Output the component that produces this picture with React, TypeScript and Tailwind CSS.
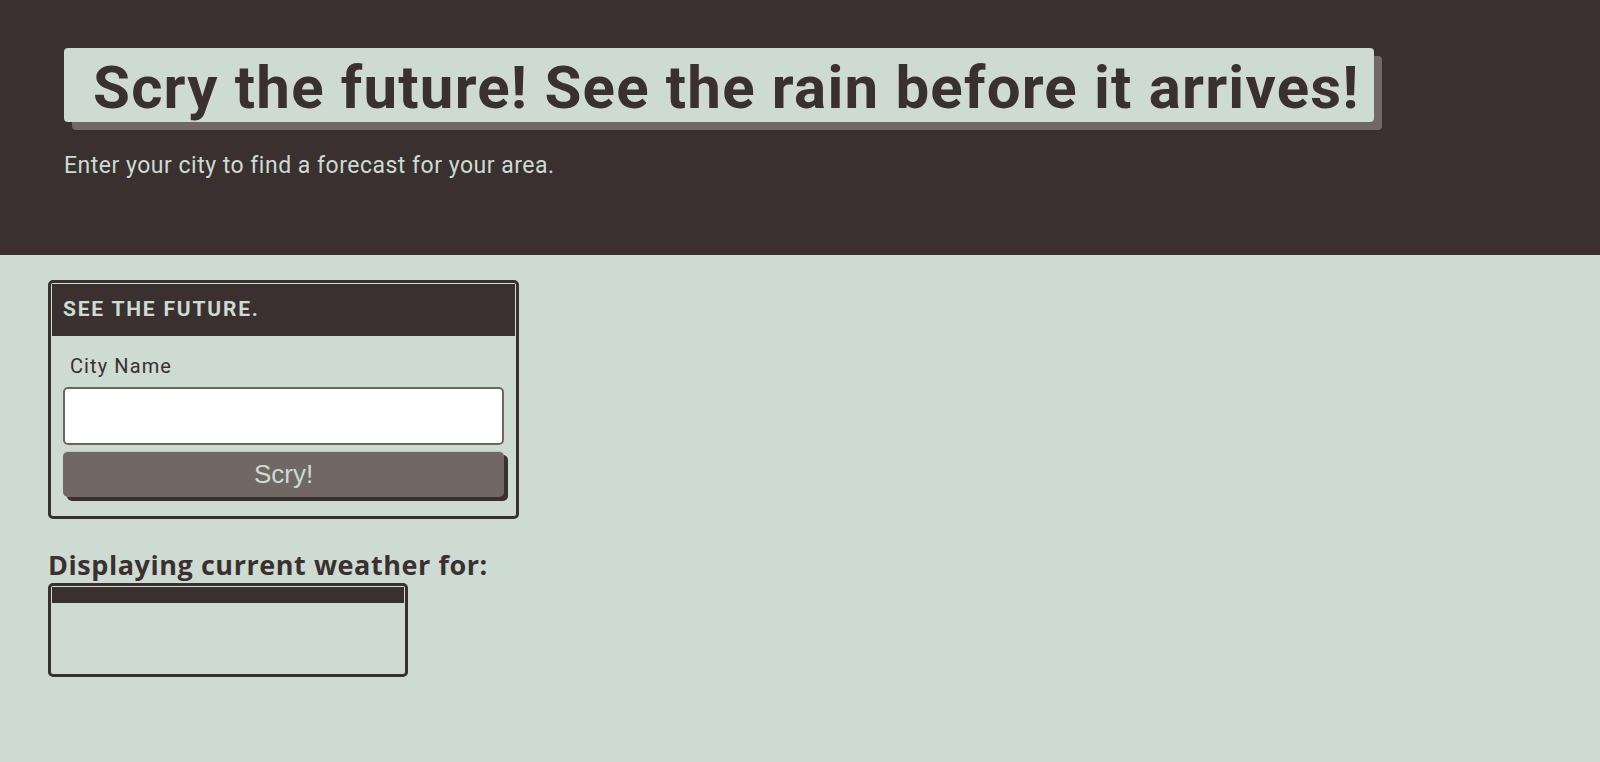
import { useState } from "react";

const font = { fontFamily: "Roboto, 'Noto Sans', sans-serif" };

export default function App() {
  const [city, setCity] = useState("");

  return (
    <div className="min-h-screen bg-[#cddbd3] text-[#3a3030]" style={font}>
      {/* ---------- hero ---------- */}
      <header className="h-[255px] bg-[#3a3030] pl-[64px] pt-[48px]">
        <h1 className="inline-flex h-[74px] items-center rounded-[4px] bg-[#cddbd3] pl-[29px] pr-[14px] pt-[6px] text-[60px] font-bold leading-none tracking-[1.2px] text-[#3a3030] shadow-[8px_8px_0_#716866]">
          Scry the future! See the rain before it arrives!
        </h1>
        <p className="mt-[30px] text-[23px] leading-[28px] tracking-[0.5px] text-[#cddbd3]">
          Enter your city to find a forecast for your area.
        </p>
      </header>

      <main className="px-[48px] pt-[25px]">
        {/* search card */}
        <form
          onSubmit={(e) => e.preventDefault()}
          className="w-[471px] rounded-[5px] border-[3px] border-[#3a3030] p-px"
        >
          <div className="flex h-[52px] items-center bg-[#3a3030] px-[11px] text-[21px] font-bold uppercase tracking-[1.8px] text-[#cddbd3]">
            See the future.
          </div>
          <div className="flex flex-col pb-[18px] pl-[11px] pr-[10px] pt-[18px]">
            <label className="pl-[7px] text-[20px] leading-[24px] tracking-[1.1px] text-[#3a3030]">City Name</label>
            <input
              value={city}
              onChange={(e) => setCity(e.target.value)}
              className="mt-[9px] h-[58px] w-[441px] rounded-[5px] border-2 border-[#6e6563] bg-white px-3 text-[20px] outline-none"
            />
            <button
              type="submit"
              className="mt-[6px] h-[46px] w-[441px] rounded-[5px] border-t border-[#b9c6be] bg-[#716866] text-[26px] text-[#cddbd3] shadow-[4px_4px_0_#3a3030]"
              style={{ fontFamily: "'Liberation Sans', Arial, sans-serif" }}
            >
              Scry!
            </button>
          </div>
        </form>

        {/* results */}
        <h2
          className="mt-[30px] text-[27px] font-bold leading-[32px] tracking-[0.55px] text-[#3a3030]"
          style={{ fontFamily: "'Open Sans', Roboto, sans-serif" }}
        >
          Displaying current weather for:
        </h2>
        <div className="mt-[2px] h-[94px] w-[360px] rounded-[5px] border-[3px] border-[#3a3030] p-px">
          <div className="h-[16px] bg-[#3a3030]" />
        </div>
      </main>
    </div>
  );
}
